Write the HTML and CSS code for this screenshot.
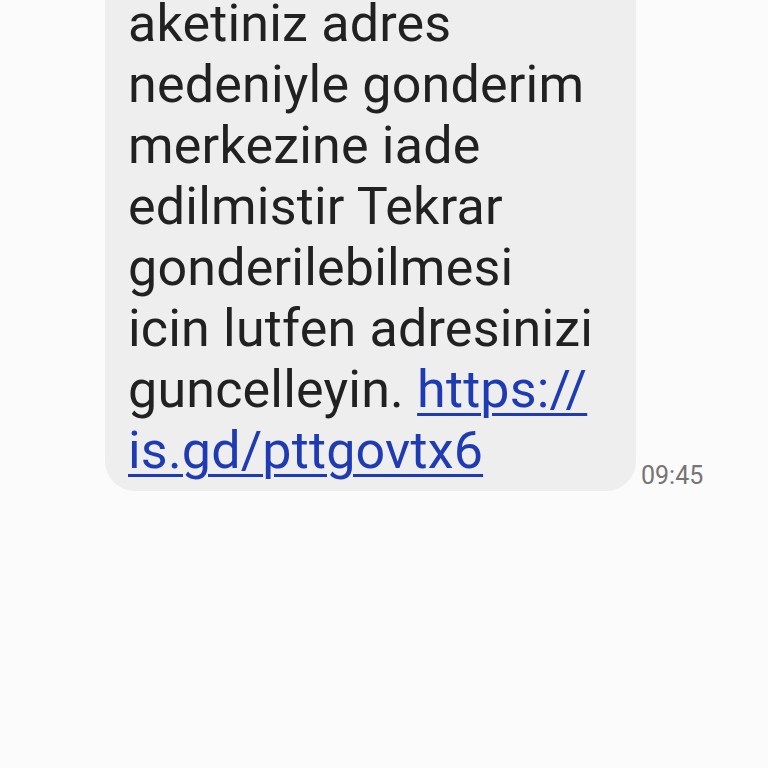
FILE: index.html
```html
<!DOCTYPE html>
<html>
<head>
<meta charset="utf-8">
<link rel="stylesheet" href="styles.css">
</head>
<body>
<div class="thread">
  <div class="row">
    <div class="bubble">
      <p class="msg">aketiniz adres<br>nedeniyle gonderim<br>merkezine iade<br>edilmistir Tekrar<br>gonderilebilmesi<br>icin lutfen adresinizi<br>guncelleyin. <a class="link" href="#">https://<br>is.gd/pttgovtx6</a></p>
    </div>
    <span class="time">09:45</span>
  </div>
</div>
</body>
</html>
```
FILE: styles.css
```css
html, body {
  margin: 0;
  padding: 0;
  background: #fbfbfb;
  width: 768px;
  height: 768px;
  overflow: hidden;
}
.thread {
  font-family: Roboto, "Noto Sans", sans-serif;
}
.row {
  display: flex;
  align-items: flex-end;
  margin-left: 105px;
  margin-top: -37px;
}
.bubble {
  width: 531px;
  background: #eeeeee;
  border-radius: 0 0 30px 30px;
  padding: 30px 0 10px 23px;
  box-sizing: border-box;
}
.msg {
  margin: 0;
  font-size: 52px;
  line-height: 61px;
  letter-spacing: 0.2px;
  color: #212121;
}
.link {
  color: #1f3bb3;
  text-decoration: underline;
  text-decoration-thickness: 3px;
  text-underline-offset: 6px;
}
.time {
  font-size: 25px;
  color: #757575;
  margin-left: 5px;
  margin-bottom: 3px;
  line-height: 1;
}
```
